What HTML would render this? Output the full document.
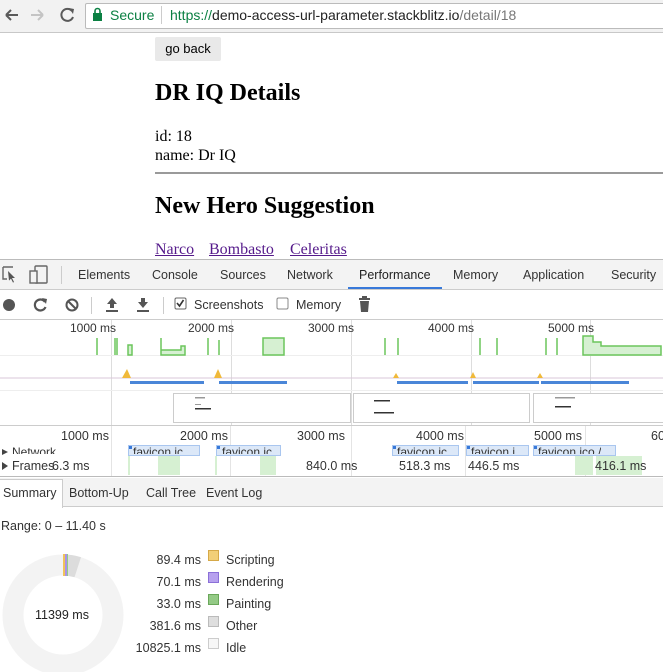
<!DOCTYPE html>
<html><head><meta charset="utf-8"><style>
*{margin:0;padding:0;box-sizing:border-box}
body{width:663px;height:672px;overflow:hidden;background:#fff;position:relative;font-family:"Liberation Sans",sans-serif}
.a{position:absolute;white-space:nowrap}
.s{font-family:"Liberation Serif",serif;color:#000}
.ui{font-size:12.5px;color:#333}
</style></head><body>
<div class="a" style="left:0;top:0;width:663px;height:33px;background:#f2f2f2;border-bottom:1px solid #c8c8c8"></div>
<svg class="a" style="left:0;top:0" width="90" height="33">
<path d="M6 15h12M6 15l5-5M6 15l5 5" stroke="#5a5a5a" stroke-width="2" fill="none"/>
<path d="M31 15h12M43 15l-5-5M43 15l-5 5" stroke="#c4c4c4" stroke-width="2" fill="none"/>
<path d="M72 11a6 6 0 1 0 1 6" stroke="#5a5a5a" stroke-width="2" fill="none"/><path d="M69 8l5 1-1 5z" fill="#5a5a5a"/>
</svg>
<div class="a" style="left:85px;top:3px;width:590px;height:26px;background:#fff;border:1px solid #bbb;border-radius:2px"></div>
<svg class="a" style="left:92px;top:7px" width="12" height="16"><rect x="1" y="6" width="9" height="8" fill="#0b8043"/><path d="M3 7V4a2.5 2.5 0 0 1 5 0v3" stroke="#0b8043" stroke-width="1.6" fill="none"/></svg>
<div class="a" style="left:110px;top:7px;font-size:14px;color:#0b8043">Secure</div>
<div class="a" style="left:161px;top:6px;width:1px;height:18px;background:#ccc"></div>
<div class="a" style="left:170px;top:7px;font-size:14px;color:#222"><span style="color:#0b8043">https://</span>demo-access-url-parameter.stackblitz.io<span style="color:#777">/detail/18</span></div>
<div class="a" style="left:155px;top:37px;width:66px;height:24px;background:#e9e9e9;border-radius:2px;font-size:13px;color:#000;text-align:center;line-height:24px">go back</div>
<div class="a s" style="left:155px;top:80px;font-size:24px;font-weight:bold">DR IQ Details</div>
<div class="a s" style="left:155px;top:127px;font-size:16px;line-height:19px">id: 18<br>name: Dr IQ</div>
<div class="a" style="left:155px;top:172px;width:508px;height:2px;background:#9a9a9a"></div>
<div class="a s" style="left:155px;top:193px;font-size:24px;font-weight:bold">New Hero Suggestion</div>
<div class="a s" style="left:155px;top:241px;font-size:16px;color:#551a8b;text-decoration:underline">Narco</div>
<div class="a s" style="left:209px;top:241px;font-size:16px;color:#551a8b;text-decoration:underline">Bombasto</div>
<div class="a s" style="left:290px;top:241px;font-size:16px;color:#551a8b;text-decoration:underline">Celeritas</div>
<div class="a" style="left:0;top:259px;width:663px;height:31px;background:#f3f3f3;border-top:1px solid #bbb;border-bottom:1px solid #ccc"></div>
<svg class="a" style="left:0;top:263px" width="60" height="24">
<path d="M3 4h10M3 4v12h4" stroke="#666" stroke-width="1.4" fill="none"/><path d="M8 8l7 7-3 0 2 4-1 .6-2-4-2 2z" fill="#555"/>
<rect x="35" y="3" width="12" height="17" rx="1" stroke="#666" stroke-width="1.4" fill="none"/><rect x="30" y="8" width="7" height="12" stroke="#666" stroke-width="1.4" fill="#f3f3f3"/>
</svg>
<div class="a" style="left:61px;top:266px;width:1px;height:18px;background:#ccc"></div>
<div class="a ui" style="top:268px;left:78px">Elements</div>
<div class="a ui" style="top:268px;left:152px">Console</div>
<div class="a ui" style="top:268px;left:220px">Sources</div>
<div class="a ui" style="top:268px;left:287px">Network</div>
<div class="a ui" style="top:268px;left:359px;color:#222">Performance</div>
<div class="a ui" style="top:268px;left:453px">Memory</div>
<div class="a ui" style="top:268px;left:523px">Application</div>
<div class="a ui" style="top:268px;left:611px">Security</div>
<div class="a" style="left:348px;top:287px;width:94px;height:2px;background:#3879d9"></div>
<div class="a" style="left:0;top:319px;width:663px;height:1px;background:#ccc"></div>
<svg class="a" style="left:0;top:293px" width="380" height="24">
<circle cx="9" cy="12" r="6" fill="#555"/>
<path d="M45 9a5.5 5.5 0 1 0 .5 5" stroke="#555" stroke-width="2.2" fill="none"/><path d="M42 5l5 1-1 5z" fill="#555"/>
<circle cx="72" cy="12" r="5.5" stroke="#555" stroke-width="2" fill="none"/><path d="M68 8l8 8" stroke="#555" stroke-width="2"/>
<rect x="91" y="4" width="1" height="17" fill="#ccc"/>
<path d="M112 5l-5 6h3v4h4v-4h3z" fill="#555"/><rect x="106" y="17" width="12" height="2" fill="#555"/>
<path d="M143 15l-5-6h3V5h4v4h3z" fill="#555"/><rect x="137" y="17" width="12" height="2" fill="#555"/>
<rect x="163" y="4" width="1" height="17" fill="#ccc"/>
<rect x="175" y="5" width="11" height="11" rx="1.5" fill="#fff" stroke="#666"/><path d="M177 10l2.5 3 4-6" stroke="#333" stroke-width="1.6" fill="none"/>
<rect x="277" y="5" width="11" height="11" rx="1.5" fill="#fff" stroke="#888"/>
<rect x="359" y="5" width="11" height="2" fill="#555"/><rect x="362" y="3" width="5" height="2" fill="#555"/><path d="M360 8h9l-1 11h-7z" fill="#555"/>
</svg>
<div class="a ui" style="left:194px;top:298px">Screenshots</div>
<div class="a ui" style="left:296px;top:298px">Memory</div>
<svg class="a" style="left:0;top:320px" width="663" height="157">
<g stroke="#ddd"><line x1="111.5" y1="0" x2="111.5" y2="105"/><line x1="231.5" y1="0" x2="231.5" y2="105"/><line x1="351.5" y1="0" x2="351.5" y2="105"/><line x1="471.5" y1="0" x2="471.5" y2="105"/><line x1="590.5" y1="0" x2="590.5" y2="105"/></g>
<line x1="0" y1="35.5" x2="663" y2="35.5" stroke="#eee"/>
<line x1="0" y1="70.5" x2="663" y2="70.5" stroke="#eee"/>
<g fill="#d6f0d2" stroke="#6cc55c" stroke-width="1.5">
<path d="M97 35V18M115 35V18M117 35V18"/>
<path d="M128 35V25h4v10z"/><path d="M161 35V18h0v12h20v-4h4v9z"/><path d="M208 35V18M219 35V20"/>
<path d="M263 35V18h21v17z"/><path d="M385 35V18M398 35V18M480 35V18M497 35V18M546 35V18M557 35V18"/>
<path d="M583 35V16h10v6h8v4h60v9z"/>
</g>
<line x1="0" y1="58" x2="663" y2="58" stroke="#d9c7d9"/>
<g fill="#f0b93a"><path d="M122 58l5-9 4 9z"/><path d="M214 58l4-9 4 9z"/><path d="M393 58l3-5 3 5z"/><path d="M470 58l3-6 3 6z"/><path d="M537 58l3-5 3 5z"/></g>
<g fill="#4a86d8"><rect x="130" y="61" width="74" height="3"/><rect x="219" y="61" width="68" height="3"/><rect x="397" y="61" width="71" height="3"/><rect x="473" y="61" width="66" height="3"/><rect x="541" y="61" width="88" height="3"/></g>
<g fill="#fff" stroke="#ccc"><rect x="173.5" y="73.5" width="177" height="29"/><rect x="353.5" y="73.5" width="176" height="29"/><rect x="533.5" y="73.5" width="140" height="29"/></g>
<g fill="#999"><rect x="195" y="77" width="10" height="1.5"/><rect x="195" y="84" width="6" height="1"/><rect x="195" y="88" width="16" height="1.5" fill="#333"/><rect x="374" y="80" width="16" height="1.5" fill="#333"/><rect x="374" y="92" width="20" height="1.5" fill="#333"/><rect x="555" y="77" width="20" height="1.5"/><rect x="555" y="86" width="16" height="1.5" fill="#333"/></g>
<line x1="0" y1="105.5" x2="663" y2="105.5" stroke="#ccc"/>
<g stroke="#e4e4e4"><line x1="111.5" y1="106" x2="111.5" y2="157"/><line x1="230.5" y1="106" x2="230.5" y2="157"/><line x1="351.5" y1="106" x2="351.5" y2="157"/><line x1="465.5" y1="106" x2="465.5" y2="157"/><line x1="585.5" y1="106" x2="585.5" y2="157"/></g>
<g fill="#dce8f8" stroke="#a9c6ef"><rect x="128.5" y="125.5" width="71" height="10"/><rect x="216.5" y="125.5" width="64" height="10"/><rect x="392.5" y="125.5" width="66" height="10"/><rect x="466.5" y="125.5" width="62" height="10"/><rect x="533.5" y="125.5" width="82" height="10"/></g>
<g fill="#3879d9"><rect x="129" y="126" width="3" height="3"/><rect x="217" y="126" width="3" height="3"/><rect x="393" y="126" width="3" height="3"/><rect x="467" y="126" width="3" height="3"/><rect x="534" y="126" width="3" height="3"/></g>
<g fill="#d6f0d2"><rect x="128" y="136" width="2" height="19"/><rect x="158" y="136" width="22" height="19"/><rect x="215" y="136" width="2" height="19"/><rect x="260" y="136" width="16" height="19"/><rect x="575" y="136" width="18" height="19"/><rect x="596" y="136" width="46" height="19"/></g>
<line x1="0" y1="156.5" x2="663" y2="156.5" stroke="#bbb"/>
<path d="M2 129l6 3-6 3zM2 142l6 4-6 4z" fill="#444"/>
</svg>
<div class="a" style="font-size:12px;color:#333;top:321px;left:70px">1000 ms</div>
<div class="a" style="font-size:12px;color:#333;top:321px;left:188px">2000 ms</div>
<div class="a" style="font-size:12px;color:#333;top:321px;left:308px">3000 ms</div>
<div class="a" style="font-size:12px;color:#333;top:321px;left:428px">4000 ms</div>
<div class="a" style="font-size:12px;color:#333;top:321px;left:548px">5000 ms</div>
<div class="a" style="font-size:12.5px;color:#333;top:429px;left:61px">1000 ms</div>
<div class="a" style="font-size:12.5px;color:#333;top:429px;left:180px">2000 ms</div>
<div class="a" style="font-size:12.5px;color:#333;top:429px;left:297px">3000 ms</div>
<div class="a" style="font-size:12.5px;color:#333;top:429px;left:416px">4000 ms</div>
<div class="a" style="font-size:12.5px;color:#333;top:429px;left:534px">5000 ms</div>
<div class="a" style="font-size:12.5px;color:#333;top:429px;left:651px">60</div>
<div class="a" style="font-size:12px;color:#333;top:445px;left:12px;height:9px;overflow:hidden">Network</div>
<div class="a" style="font-size:12px;color:#333;top:445px;left:133px;height:9px;overflow:hidden">favicon.ic</div>
<div class="a" style="font-size:12px;color:#333;top:445px;left:222px;height:9px;overflow:hidden">favicon.ic</div>
<div class="a" style="font-size:12px;color:#333;top:445px;left:397px;height:9px;overflow:hidden">favicon.ic</div>
<div class="a" style="font-size:12px;color:#333;top:445px;left:471px;height:9px;overflow:hidden">favicon.i</div>
<div class="a" style="font-size:12px;color:#333;top:445px;left:538px;height:9px;overflow:hidden">favicon.ico /</div>
<div class="a" style="font-size:12.5px;color:#333;top:459px;left:12px">Frames</div>
<div class="a" style="font-size:12.5px;color:#333;top:459px;left:52px">6.3 ms</div>
<div class="a" style="font-size:12.5px;color:#333;top:459px;left:306px">840.0 ms</div>
<div class="a" style="font-size:12.5px;color:#333;top:459px;left:399px">518.3 ms</div>
<div class="a" style="font-size:12.5px;color:#333;top:459px;left:468px">446.5 ms</div>
<div class="a" style="font-size:12.5px;color:#333;top:459px;left:595px">416.1 ms</div>
<div class="a" style="left:0;top:478px;width:663px;height:29px;background:#f3f3f3;border-bottom:1px solid #ccc"></div>
<div class="a" style="left:0;top:479px;width:63px;height:29px;background:#fff;border:1px solid #ccc;border-bottom:none;border-left:none"></div>
<div class="a ui" style="left:3px;top:486px">Summary</div>
<div class="a ui" style="left:69px;top:486px">Bottom-Up</div>
<div class="a ui" style="left:146px;top:486px">Call Tree</div>
<div class="a ui" style="left:206px;top:486px">Event Log</div>
<div class="a ui" style="left:1px;top:519px">Range: 0 – 11.40 s</div>
<svg class="a" style="left:0;top:552px" width="130" height="120">
<circle cx="63" cy="63" r="50" fill="none" stroke="#f3f3f3" stroke-width="21"/>
<path d="M63 2.5A60.5 60.5 0 0 1 81 5.2L74.5 25.3A40 40 0 0 0 63 23.5z" fill="#dcdcdc"/>
<rect x="63" y="2" width="2" height="22" fill="#f0c35a"/><rect x="65" y="2" width="2" height="22" fill="#a992e8"/><rect x="67" y="2" width="1" height="22" fill="#8fcf82"/>
</svg>
<div class="a" style="left:35px;top:608px;font-size:12.5px;color:#222">11399 ms</div>
<div class="a ui" style="left:100px;width:101px;text-align:right;top:549px;line-height:22px">89.4 ms<br>70.1 ms<br>33.0 ms<br>381.6 ms<br>10825.1 ms</div>
<div class="a" style="left:208px;top:550px;width:11px;height:11px;background:#f2cf78;border:1px solid #d6a948"></div>
<div class="a" style="left:208px;top:572px;width:11px;height:11px;background:#b7a1ee;border:1px solid #8b70d8"></div>
<div class="a" style="left:208px;top:594px;width:11px;height:11px;background:#94ca86;border:1px solid #6aa75a"></div>
<div class="a" style="left:208px;top:616px;width:11px;height:11px;background:#dedede;border:1px solid #bbb"></div>
<div class="a" style="left:208px;top:638px;width:11px;height:11px;background:#f7f7f7;border:1px solid #ccc"></div>
<div class="a ui" style="left:226px;top:549px;line-height:22px">Scripting<br>Rendering<br>Painting<br>Other<br>Idle</div>
</body></html>
